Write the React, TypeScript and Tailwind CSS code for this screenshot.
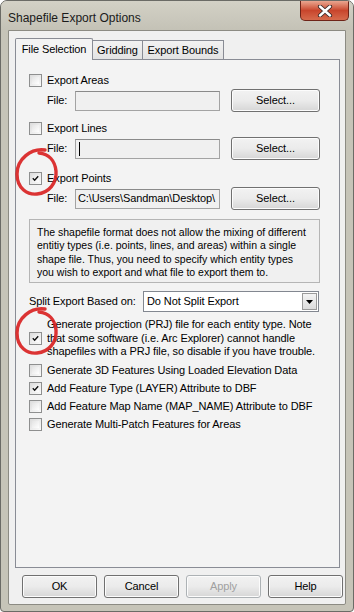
import React from "react";

const font = { fontFamily: '"Liberation Sans", Arial, sans-serif' };

function Check({ checked }: { checked?: boolean }) {
  return (
    <div className="w-[13px] h-[13px] border border-[#8e8f8f] bg-gradient-to-br from-[#dcdcdc] to-[#fbfbfb] p-[2px] shrink-0">
      <div className="w-full h-full bg-gradient-to-br from-[#e4e4e4] to-white flex items-center justify-center">
        {checked && (
          <svg width="9" height="9" viewBox="0 0 9 9">
            <path d="M1 4.2 L3.4 6.8 L8 1.6" stroke="#111" strokeWidth="1.8" fill="none" />
          </svg>
        )}
      </div>
    </div>
  );
}

function Btn({ label, disabled, w }: { label: string; disabled?: boolean; w: string }) {
  return (
    <div
      className={`${w} h-[23px] rounded-[3px] border ${disabled ? "border-[#adb2b5] text-[#a0a0a0]" : "border-[#707070] text-black"} bg-gradient-to-b from-[#f2f2f2] via-[#ebebeb] to-[#d6d6d6] flex items-center justify-center text-[11px] shadow-[inset_0_0_0_1px_#fcfcfc]`}
    >
      {label}
    </div>
  );
}

function FileRow({ value, caret }: { value?: string; caret?: boolean }) {
  return (
    <div className="flex items-center h-[23px]">
      <span className="ml-[18px] w-[28px] text-[11px]">File:</span>
      <div className="w-[145px] h-[20px] border border-[#a3a3a3] border-t-[#8a8a8a] bg-[#f0f0f0] flex items-center pl-[2px] overflow-hidden whitespace-nowrap text-[11px]">
        {caret && <div className="w-px h-[14px] bg-black ml-[1px]" />}
        {value}
      </div>
      <div className="ml-[11px]">
        <Btn label="Select..." w="w-[89px]" />
      </div>
    </div>
  );
}

function CheckRow({ label, checked, cls }: { label: string; checked?: boolean; cls?: string }) {
  return (
    <div className={`flex items-center h-[18px] ${cls ?? ""}`}>
      <Check checked={checked} />
      <span className="ml-[5px] text-[11px] whitespace-nowrap">{label}</span>
    </div>
  );
}

export default function App() {
  return (
    <div style={font} className="relative w-[354px] h-[612px] bg-[#c6c4b8] rounded-t-[7px] rounded-b-[4px] border border-[#6b6b66] overflow-hidden text-black tracking-[-0.1px]">
      {/* title bar */}
      <div className="h-[29px] flex items-start bg-gradient-to-b from-[#d3d1c6] to-[#c4c2b6]">
        <span className="ml-[7px] mt-[8px] text-[12px] text-[#1a1a1a] tracking-normal">Shapefile Export Options</span>
        <div className="ml-auto mr-[4px] w-[49px] h-[20px] rounded-b-[5px] border border-t-0 border-[#6e2418] bg-gradient-to-b from-[#e9a690] via-[#c8452c] to-[#d66a4c] flex items-center justify-center">
          <svg width="16" height="12" viewBox="0 0 16 12">
            <path d="M3 1.5 L13 10.5 M13 1.5 L3 10.5" stroke="#3b2a28" strokeWidth="4.2" strokeLinecap="round" />
            <path d="M3 1.5 L13 10.5 M13 1.5 L3 10.5" stroke="#ffffff" strokeWidth="2.4" strokeLinecap="round" />
          </svg>
        </div>
      </div>

      {/* client area */}
      <div className="ml-[7px] mt-0 w-[338px] h-[575px] bg-[#f0f0f0] border border-[#8c8b83] rounded-b-[2px] flex flex-col">
        {/* tabs */}
        <div className="flex items-end ml-[6px] mt-[6px] h-[22px] relative z-10">
          <div className="h-[22px] w-[78px] border border-b-0 border-[#898c95] bg-[#f3f3f3] rounded-t-[2px] flex items-center justify-center text-[11px] -mb-px pb-[1px]">
            File Selection
          </div>
          <div className="h-[19px] w-[50px] border border-b-0 border-l-0 border-[#898c95] bg-gradient-to-b from-[#f2f2f2] to-[#e3e3e3] flex items-center justify-center text-[11px]">
            Gridding
          </div>
          <div className="h-[19px] w-[81px] border border-b-0 border-l-0 border-[#898c95] bg-gradient-to-b from-[#f2f2f2] to-[#e3e3e3] flex items-center justify-center text-[11px]">
            Export Bounds
          </div>
        </div>

        {/* panel */}
        <div className="ml-[6px] w-[325px] h-[509px] border border-[#898c95] bg-[#f3f3f3] flex flex-col pl-[13px]">
          <CheckRow label="Export Areas" cls="mt-[11px]" />
          <FileRow />
          <CheckRow label="Export Lines" cls="mt-[7px]" />
          <FileRow caret />
          <CheckRow label="Export Points" checked cls="mt-[9px]" />
          <FileRow value={"C:\\Users\\Sandman\\Desktop\\"} />

          <div className="mt-[9px] w-[291px] h-[64px] border border-[#b5b5b5] bg-[#f0f0f0] pl-[7px] pt-[6px] text-[10.5px] leading-[13.4px] tracking-normal whitespace-nowrap overflow-hidden">
            <div>The shapefile format does not allow the mixing of different</div>
            <div>entitiy types (i.e. points, lines, and areas) within a single</div>
            <div>shape file. Thus, you need to specify which entity types</div>
            <div>you wish to export and what file to export them to.</div>
          </div>

          <div className="mt-[8px] flex items-center h-[21px]">
            <span className="w-[114px] text-[11px] whitespace-nowrap">Split Export Based on:</span>
            <div className="w-[176px] h-[21px] border border-[#828790] bg-white flex items-center pl-[3px] text-[11px]">
              <span className="flex-1">Do Not Split Export</span>
              <div className="w-[15px] h-[17px] mr-[1px] border border-[#9a9a9a] bg-gradient-to-b from-[#f4f4f4] to-[#dcdcdc] flex items-center justify-center">
                <svg width="7" height="4" viewBox="0 0 7 4">
                  <path d="M0 0 L7 0 L3.5 4 Z" fill="#000" />
                </svg>
              </div>
            </div>
          </div>

          <div className="mt-[6px] flex items-center">
            <Check checked />
            <div className="ml-[5px] text-[11px] leading-[13.5px] whitespace-nowrap">
              <div>Generate projection (PRJ) file for each entity type. Note</div>
              <div>that some software (i.e. Arc Explorer) cannot handle</div>
              <div>shapefiles with a PRJ file, so disable if you have trouble.</div>
            </div>
          </div>
          <CheckRow label="Generate 3D Features Using Loaded Elevation Data" cls="mt-[3px]" />
          <CheckRow label="Add Feature Type (LAYER) Attribute to DBF" checked />
          <CheckRow label="Add Feature Map Name (MAP_NAME) Attribute to DBF" />
          <CheckRow label="Generate Multi-Patch Features for Areas" />
        </div>

        {/* buttons */}
        <div className="mt-[7px] ml-[13px] flex gap-[7px]">
          <Btn label="OK" w="w-[75px]" />
          <Btn label="Cancel" w="w-[75px]" />
          <Btn label="Apply" disabled w="w-[75px]" />
          <Btn label="Help" w="w-[75px]" />
        </div>
      </div>

      {/* red annotation circles */}
      <svg className="absolute left-0 top-0 pointer-events-none" width="354" height="612" viewBox="0 0 354 612">
        <g fill="none" stroke="#d81e1e" strokeWidth="3.4" strokeLinecap="round" opacity="0.9">
          <path d="M44 149 C30 147 16 158 16 173 C16 188 27 194 36 193 C48 192 56 182 55 170 C54 160 48 153 38 152" />
          <path d="M44 308 C30 306 16 317 16 332 C16 347 27 353 36 352 C48 351 56 341 55 329 C54 319 48 312 38 311" />
        </g>
      </svg>
    </div>
  );
}
